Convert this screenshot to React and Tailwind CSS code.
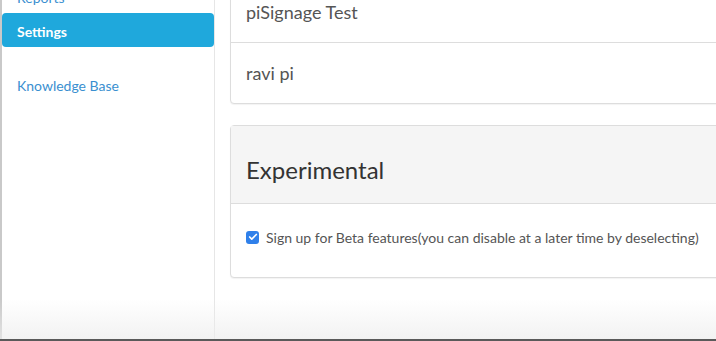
import { Check } from "lucide-react";

const navItems = [
  { label: "Reports", active: false },
  { label: "Settings", active: true },
];

const App = () => {
  return (
    <div className="relative h-[341px] w-[716px] overflow-hidden bg-white font-['Lato','Open_Sans',sans-serif]">
      <div className="flex h-full border-l-2 border-[#c9c9c9]">
        {/* sidebar */}
        <aside className="w-[213px] shrink-0 border-r border-[#e6e6e6]">
          <ul className="-mt-[21px] flex flex-col">
            {navItems.map((item) => (
              <li key={item.label}>
                <a
                  className={
                    item.active
                      ? "flex h-[34px] items-center rounded-[4px] bg-[#1fa8dc] pl-[15px] pt-[2px] text-[14px] font-bold text-white"
                      : "flex h-[34px] items-center pl-[15px] pt-[2px] text-[14px] text-[#3a8fd0]"
                  }
                >
                  {item.label}
                </a>
              </li>
            ))}
            <li className="mt-[20px]">
              <a className="flex h-[34px] items-center pl-[15px] pt-[2px] text-[14px] text-[#3a8fd0]">
                Knowledge Base
              </a>
            </li>
          </ul>
        </aside>

        {/* main */}
        <main className="flex-1 pl-[15px]">
          <div className="-mt-[19px] w-[520px] rounded-b-[4px] border border-[#dddddd] bg-white shadow-[0_1px_1px_rgba(0,0,0,0.05)]">
            <div className="flex h-[61px] items-center border-b border-[#dddddd] px-[15px] text-[18px] text-[#555555]">
              piSignage Test
            </div>
            <div className="flex h-[60px] items-center px-[15px] text-[18px] text-[#555555]">
              ravi pi
            </div>
          </div>

          <div className="mt-[21px] w-[520px] rounded-[4px] border border-[#dddddd] bg-white shadow-[0_1px_1px_rgba(0,0,0,0.05)]">
            <div className="flex h-[78px] items-center border-b border-[#dddddd] bg-[#f5f5f5] px-[15px] pt-[10px] text-[24px] text-[#333333]">
              Experimental
            </div>
            <div className="flex h-[73px] items-center gap-[7px] px-[15px] pb-[7px] text-[14px] text-[#555555]">
              <span className="flex h-[13px] w-[13px] shrink-0 items-center justify-center rounded-[3px] bg-[#2f80ea]">
                <Check size={10} strokeWidth={4} className="text-white" />
              </span>
              <span>Sign up for Beta features(you can disable at a later time by deselecting)</span>
            </div>
          </div>
        </main>
      </div>

      {/* window bottom shading */}
      <div className="pointer-events-none absolute inset-x-0 bottom-[2px] h-[40px] bg-gradient-to-b from-transparent to-[#ededed]/70" />
      <div className="absolute inset-x-0 bottom-0 h-[2px] bg-[#5a5a5a]" />
    </div>
  );
};

export default App;
